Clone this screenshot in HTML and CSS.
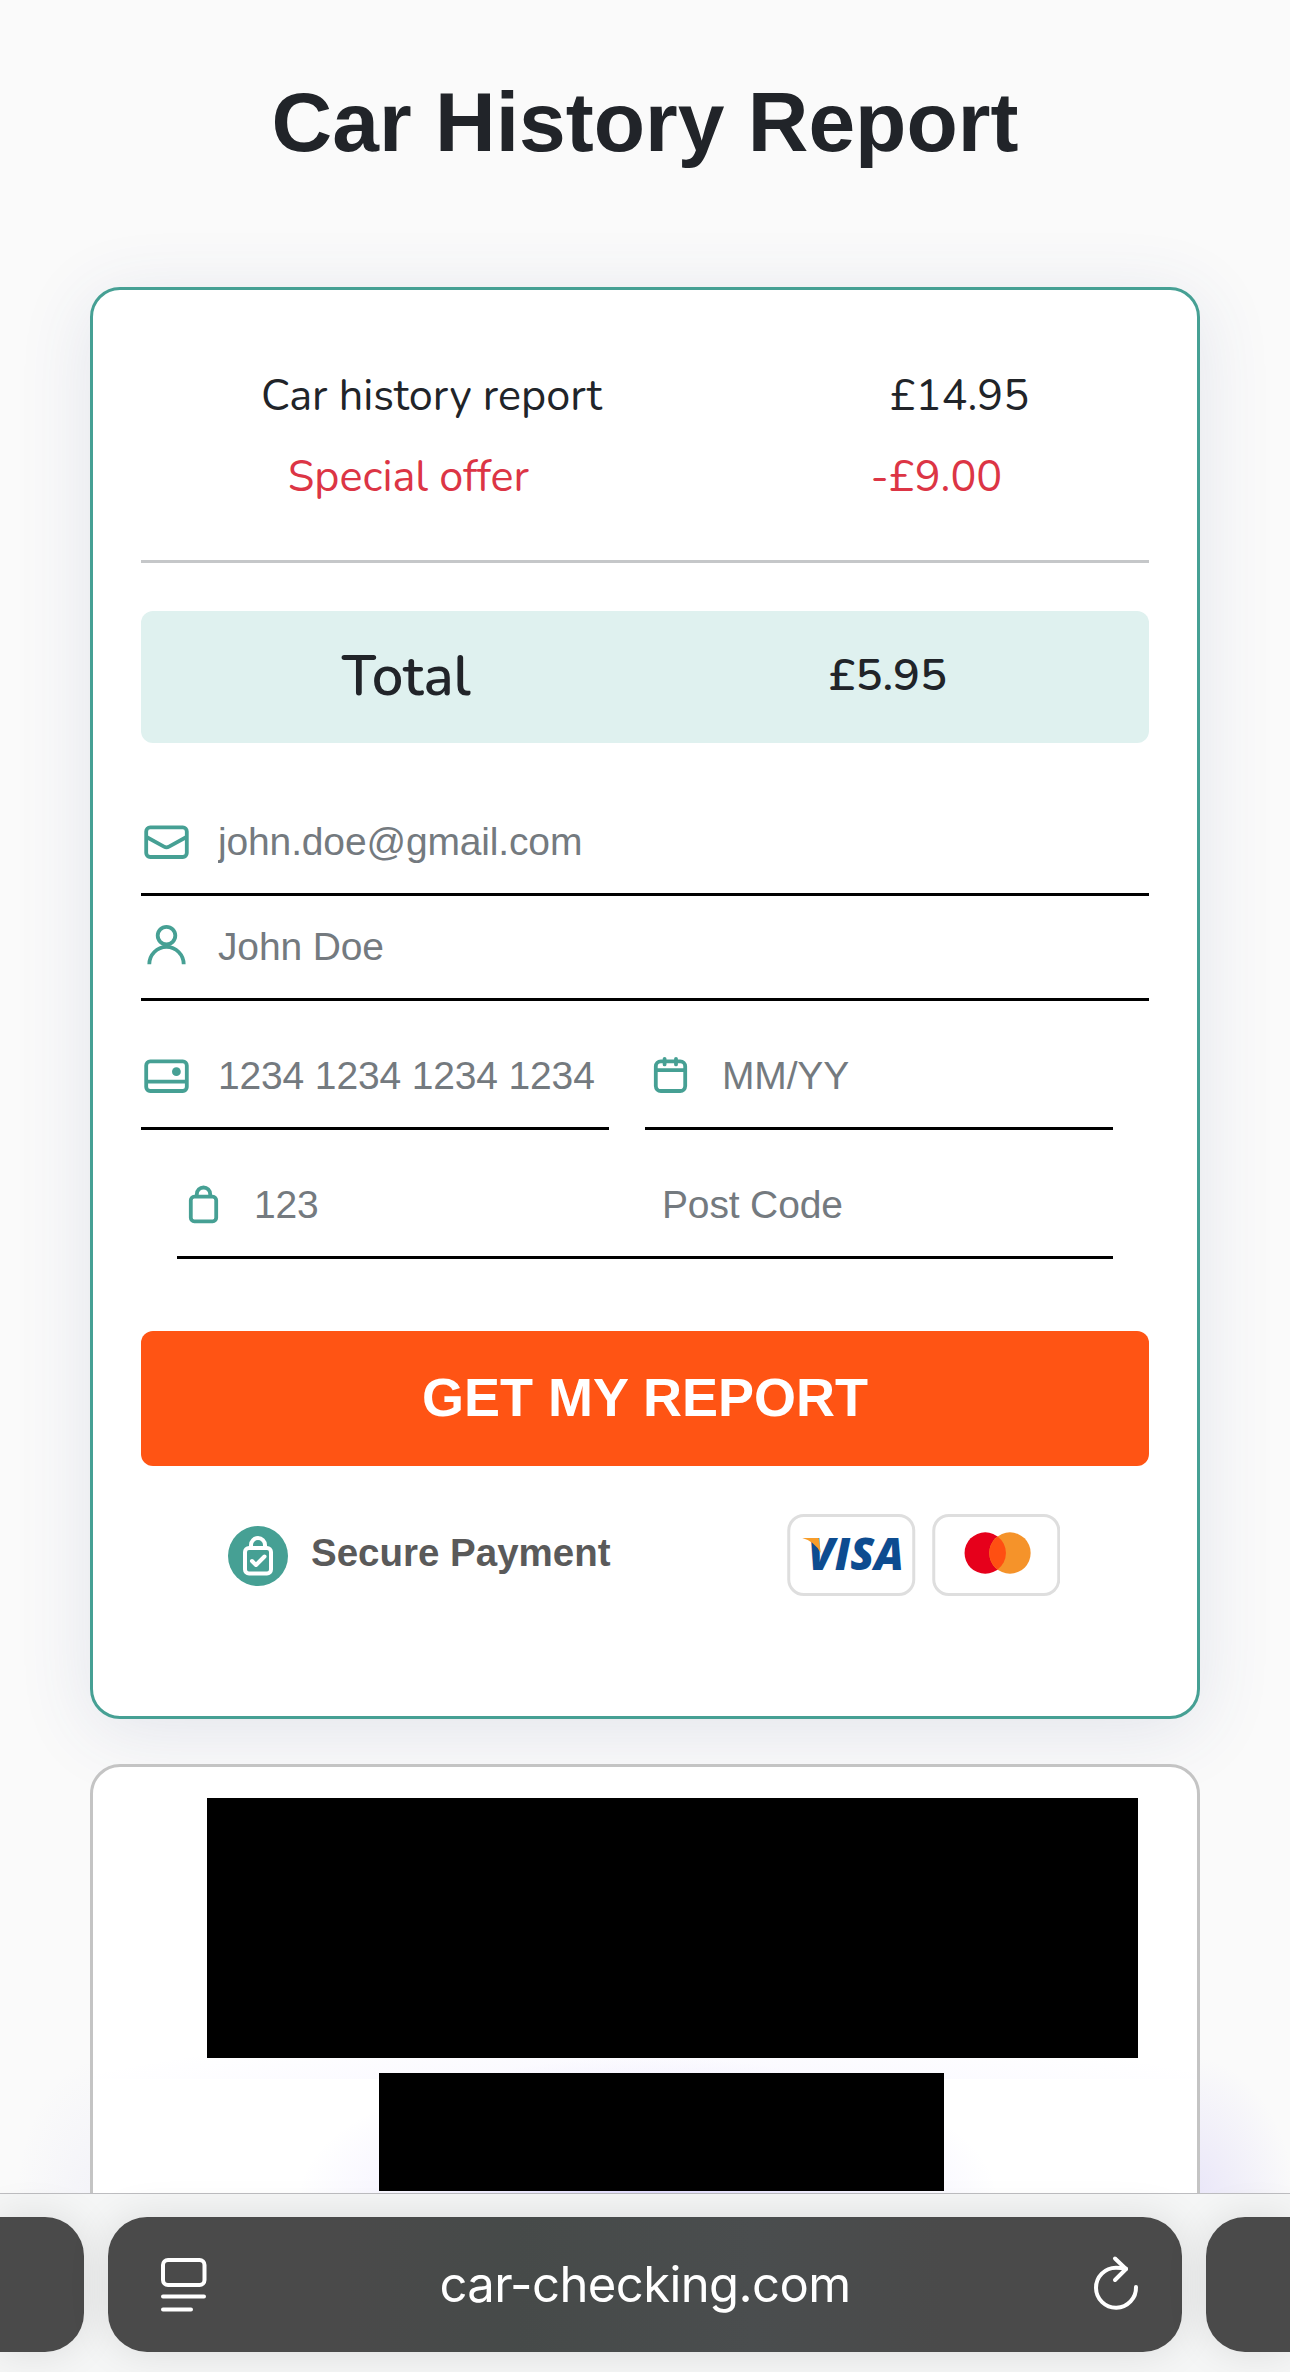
FILE: index.html
```html
<!DOCTYPE html>
<html lang="en">
<head>
    <meta charset="UTF-8">
    <meta name="viewport" content="width=device-width, initial-scale=1.0">
    <title>Car History Report</title>
    <link rel="stylesheet" href="styles.css">
</head>
<body>
    <h1>Car History Report</h1>

    <main>
        <form class="card checkout" onsubmit="event.preventDefault();">
            <div class="line-item">
                <span>Car history report</span>
                <span>£14.95</span>
            </div>
            <div class="line-item offer">
                <span>Special offer</span>
                <span>-£9.00</span>
            </div>
            <hr>
            <div class="total">
                <span class="total-label">Total</span>
                <span class="total-price">£5.95</span>
            </div>

            <div class="field">
                <svg class="icon" viewBox="0 0 51 51">
                    <rect x="5.2" y="10.4" width="40.6" height="29.6" rx="4"/>
                    <path d="M5.5 20 L23 29.6 Q25.5 31 28 29.6 L45.5 20"/>
                </svg>
                <input type="email" name="email" placeholder="john.doe@gmail.com">
            </div>
            <div class="field">
                <svg class="icon" viewBox="0 0 51 51">
                    <circle cx="25.5" cy="13.6" r="8.8"/>
                    <path d="M8.3 42.3 A17.2 17.4 0 0 1 42.7 42.3"/>
                </svg>
                <input type="text" name="name" placeholder="John Doe">
            </div>

            <div class="field-row">
                <div class="field">
                    <svg class="icon" viewBox="0 0 51 51">
                        <rect x="5.2" y="10.4" width="40.6" height="29.6" rx="4"/>
                        <path d="M5 30.6 H46"/>
                        <circle class="dot" cx="35.4" cy="20.7" r="4.4"/>
                    </svg>
                    <input type="text" name="card" placeholder="1234 1234 1234 1234">
                </div>
                <div class="field">
                    <svg class="icon" viewBox="0 0 51 51">
                        <rect x="10.8" y="10.4" width="29.4" height="29.6" rx="5"/>
                        <path d="M11 19.2 H40 M19.6 7.8 V13.4 M31 7.8 V13.4" stroke-linecap="round"/>
                    </svg>
                    <input type="text" name="expiry" placeholder="MM/YY">
                </div>
            </div>

            <div class="field field-cvc">
                <svg class="icon" viewBox="0 0 51 51">
                    <rect x="13.8" y="16.7" width="25.4" height="24.6" rx="3.5"/>
                    <path d="M19.8 16 V14.2 A6.7 6.7 0 0 1 33.2 14.2 V16"/>
                </svg>
                <input class="cvc" type="text" name="cvc" placeholder="123">
                <input class="postcode" type="text" name="postcode" placeholder="Post Code">
            </div>

            <button type="submit">GET MY REPORT</button>

            <div class="payment">
                <div class="secure">
                    <svg class="secure-icon" viewBox="0 0 60 60">
                        <circle cx="30" cy="30" r="30" fill="#46a094"/>
                        <g fill="none" stroke="#fff" stroke-width="4" stroke-linejoin="round" stroke-linecap="round">
                            <rect x="17" y="22" width="26" height="25.5" rx="4"/>
                            <path d="M23 21 V19 A7 7 0 0 1 37 19 V21"/>
                            <path d="M24 35 L28 39 L36.5 30.5"/>
                        </g>
                    </svg>
                    <span>Secure Payment</span>
                </div>
                <div class="brands">
                    <svg class="brand" viewBox="0 0 128 82">
                        <rect x="1.5" y="1.5" width="125" height="79" rx="15"/>
                        <text class="visa" x="20.5" y="56" textLength="96" lengthAdjust="spacingAndGlyphs">VISA</text>
                        <path d="M15 24 H31.5 L33.5 39 Q27 27 15 24 Z" fill="#f79d2a"/>
                    </svg>
                    <svg class="brand" viewBox="0 0 128 82">
                        <rect x="1.5" y="1.5" width="125" height="79" rx="15"/>
                        <circle cx="53" cy="39" r="20.7" fill="#e6001b"/>
                        <circle cx="77.7" cy="39" r="20.7" fill="#f5932a"/>
                        <path d="M65.35 22.4 A20.7 20.7 0 0 1 65.35 55.6 A20.7 20.7 0 0 1 65.35 22.4 Z" fill="#ff4f12"/>
                    </svg>
                </div>
            </div>
        </form>

        <section class="card details">
            <div class="block block-title"></div>
            <div class="block block-action"></div>
        </section>
    </main>

    <nav class="toolbar">
        <div class="tab tab-prev"></div>
        <div class="tab tab-current">
            <svg class="page-icon" viewBox="0 0 46 56">
                <rect x="2" y="3" width="41.5" height="25" rx="5"/>
                <path d="M2 39.5 H43 M2 52.5 H30"/>
            </svg>
            <span class="address">car-checking.com</span>
            <svg class="reload-icon" viewBox="0 0 46 56">
                <path d="M43 30 A20 20 0 1 1 23 10.7 Q28 10.7 33 11.8"/>
                <path d="M22 1.5 L33 12 L22 23"/>
            </svg>
        </div>
        <div class="tab tab-next"></div>
    </nav>
</body>
</html>
```

FILE: styles.css
```css
* {
    box-sizing: border-box;
}
body {
    height: 2372px;
    margin: 0;
    overflow: hidden;
    background:
        radial-gradient(ellipse 110px 150px at 1185px 2205px, rgba(140, 120, 240, 0.17), transparent),
        radial-gradient(ellipse 90px 150px at 105px 2205px, rgba(120, 120, 220, 0.06), transparent) #fafafa;
    color: #212429;
    font-family: Helvetica, "Liberation Sans", Arial, sans-serif;
}
h1 {
    margin: 0;
    padding: 72px 0 115px;
    font-size: 84px;
    line-height: 100px;
    text-align: center;
}
main {
    padding: 0 90px;
}
.card {
    border: 3px solid #c4c4c4;
    border-radius: 30px;
    background-color: #fff;
}
.checkout {
    padding: 65px 48px 120px;
    border-color: #46a094;
    box-shadow: 0 12px 75px rgba(60, 70, 130, 0.12);
}

/* price summary */
.line-item {
    display: flex;
    justify-content: space-around;
    gap: 48px;
    font-family: Nunito, Lato, sans-serif;
    font-size: 43.2px;
    line-height: 81px;
    white-space: nowrap;
}
.offer {
    color: #dc3545;
}
hr {
    height: 3px;
    margin: 43px 0 48px;
    border: 0;
    background-color: #c5c7c9;
}
.total {
    display: flex;
    justify-content: space-around;
    align-items: center;
    height: 132px;
    padding: 0 23px 0 22px;
    border-radius: 12px;
    background-color: #dff1ef;
    font-family: Nunito, Lato, sans-serif;
    font-weight: 600;
}
.total-label {
    padding-bottom: 1px;
    font-size: 56px;
}
.total-price {
    padding-bottom: 3px;
    font-size: 45px;
}

/* form fields */
.field {
    display: flex;
    align-items: center;
    gap: 26px;
    height: 105px;
    border-bottom: 3px solid #000;
}
.total + .field {
    margin-top: 48px;
}
.field-row {
    display: flex;
    gap: 36px;
    margin: 24px 36px 0 0;
}
.field-row .field {
    flex: 1;
    min-width: 0;
    padding-right: 14px;
}
.field-cvc {
    margin: 24px 36px 0;
}
.icon {
    flex: none;
    width: 51px;
    height: 51px;
    fill: none;
    stroke: #46a094;
    stroke-width: 3.8;
}
.icon .dot {
    fill: #46a094;
    stroke: none;
}
input {
    flex: 1;
    min-width: 0;
    height: 60px;
    padding: 0;
    border: 0;
    outline: 0;
    background: transparent;
    font-family: inherit;
    font-size: 39px;
    letter-spacing: -0.15px;
}
input::placeholder {
    color: #747a7f;
    opacity: 1;
}
.cvc {
    flex: none;
    width: 382px;
}
button {
    display: block;
    width: 100%;
    height: 135px;
    margin-top: 72px;
    padding: 0 0 3px;
    border: 0;
    border-radius: 12px;
    background-color: #ff5414;
    color: #fff;
    font-family: inherit;
    font-size: 54px;
    font-weight: bold;
}

/* payment logos */
.payment {
    display: flex;
    justify-content: space-between;
    height: 82px;
    margin-top: 48px;
    padding: 0 89px 0 87px;
}
.secure {
    display: flex;
    align-items: center;
    gap: 23px;
    color: #5a5a5a;
    font-size: 38.5px;
    font-weight: bold;
}
.secure span {
    padding-bottom: 5px;
}
.secure-icon {
    width: 60px;
    height: 60px;
    margin-top: 2px;
}
.brands {
    display: flex;
    gap: 16px;
}
.brand {
    width: 128.5px;
    height: 82px;
}
.brand rect {
    fill: #fff;
    stroke: #dedede;
    stroke-width: 3;
}
.visa {
    fill: #0d4c90;
    font-family: "Open Sans", sans-serif;
    font-size: 45px;
    font-style: italic;
    font-weight: 800;
}

.details {
    height: 640px;
    margin-top: 45px;
    padding-top: 31px;
    background:
        radial-gradient(ellipse 690px 110px at 555px 370px, rgba(140, 120, 250, 0.1), transparent) 0 0 / 100% 312px no-repeat,
        radial-gradient(ellipse 350px 140px at 555px 430px, rgba(140, 120, 250, 0.26), transparent) #fff;
}
.block {
    background-color: #000;
}
.block-title {
    width: 931px;
    height: 260px;
    margin-left: 114px;
}
.block-action {
    width: 565px;
    height: 118px;
    margin: 15px 0 0 286px;
}

/* browser toolbar */
.toolbar {
    position: fixed;
    right: 0;
    bottom: 0;
    left: 0;
    display: flex;
    gap: 24px;
    height: 179px;
    padding-top: 23px;
    border-top: 1px solid #bdbdc0;
    background-color: #f5f6f6;
}
.tab {
    width: 84px;
    height: 135px;
    background-color: #4a4a4a;
    box-shadow: 0 0 42px rgba(0, 0, 0, 0.11);
}
.tab-prev {
    border-radius: 0 39px 39px 0;
}
.tab-next {
    border-radius: 39px 0 0 39px;
}
.tab-current {
    display: flex;
    flex: 1;
    align-items: center;
    justify-content: space-between;
    padding: 0 43px 0 53px;
    border-radius: 39px;
    background: linear-gradient(to right, #4a4a4a 22%, #464a49 38%, #4a4d4e 60%, #4a4a4a 78%);
    color: #fff;
    font-family: Inter, sans-serif;
    font-size: 49px;
    letter-spacing: -0.6px;
}
.address {
    margin-right: 10px;
}
.page-icon, .reload-icon {
    width: 46px;
    height: 56px;
    overflow: visible;
    fill: none;
    stroke: #fff;
    stroke-width: 4;
    stroke-linecap: round;
    stroke-linejoin: round;
}
```
